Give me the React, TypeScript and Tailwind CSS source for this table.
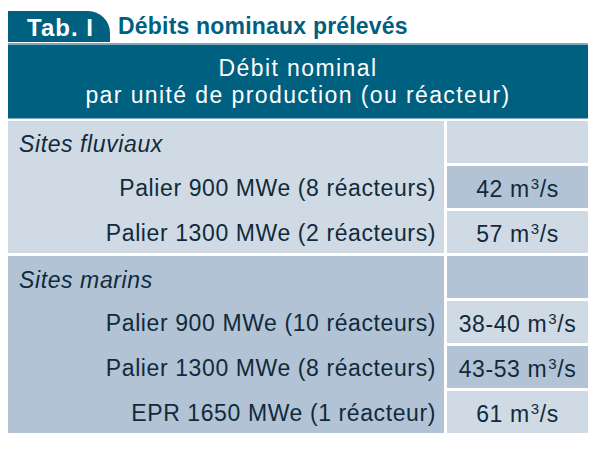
import React from "react";

const font = { fontFamily: '"Liberation Sans", Arial, sans-serif' };

function Val({ v }: { v: string }) {
  return (
    <span>
      {v} m<sup className="text-[15px] relative -top-[8px] ml-[1px]">3</sup>/s
    </span>
  );
}

export default function App() {
  const light = "bg-[#d0dae4]";
  const dark = "bg-[#b1c3d5]";
  return (
    <div className="w-[601px] h-[450px] bg-white pt-[11px] pl-[8px] text-[#112a3b]" style={font}>
      <div className="flex items-stretch h-[31px]">
        <div className="w-[102px] bg-[#00607f] rounded-tr-[22px] pl-[19px] text-white font-bold text-[24px] tracking-[1px] leading-[33px]">
          Tab. I
        </div>
        <div className="ml-[8px] text-[#00607f] font-bold text-[23px] tracking-[0.2px] leading-[31px]">
          Débits nominaux prélevés
        </div>
      </div>
      <div className="mt-[1px] w-[580px] border-t-[2px] border-[#7fa9bf] bg-[#00607f] h-[76px] border-b border-b-[#7fa9bf] flex flex-col items-center justify-center text-white text-[23px] tracking-[1.4px] leading-[27px]">
        <div>Débit nominal</div>
        <div>par unité de production (ou réacteur)</div>
      </div>
      <div className="mt-[2px] flex flex-col gap-[3px] w-[580px] text-[23px] tracking-[0.6px]">
        <div className="flex gap-[3px]">
          <div className={`w-[436px] ${light} flex flex-col`}>
            <div className="h-[42px] flex items-center pt-[5px] pl-[11px] italic">Sites fluviaux</div>
            <div className="h-[45px] flex items-center pt-[5px] justify-end pr-[8px]">Palier 900 MWe (8 réacteurs)</div>
            <div className="h-[45px] flex items-center pt-[5px] justify-end pr-[8px]">Palier 1300 MWe (2 réacteurs)</div>
          </div>
          <div className="flex-1 flex flex-col gap-[3px]">
            <div className={`h-[42px] ${light}`}></div>
            <div className={`h-[42px] ${dark} flex items-center pt-[5px] justify-center`}><Val v="42" /></div>
            <div className={`h-[42px] ${light} flex items-center pt-[5px] justify-center`}><Val v="57" /></div>
          </div>
        </div>
        <div className="flex gap-[3px]">
          <div className={`w-[436px] ${dark} flex flex-col`}>
            <div className="h-[42px] flex items-center pt-[7px] pl-[11px] italic">Sites marins</div>
            <div className="h-[45px] flex items-center pt-[5px] justify-end pr-[8px]">Palier 900 MWe (10 réacteurs)</div>
            <div className="h-[45px] flex items-center pt-[5px] justify-end pr-[8px]">Palier 1300 MWe (8 réacteurs)</div>
            <div className="h-[45px] flex items-center pt-[5px] justify-end pr-[8px]">EPR 1650 MWe (1 réacteur)</div>
          </div>
          <div className="flex-1 flex flex-col gap-[3px]">
            <div className={`h-[42px] ${dark}`}></div>
            <div className={`h-[42px] ${light} flex items-center pt-[5px] justify-center`}><Val v="38-40" /></div>
            <div className={`h-[42px] ${dark} flex items-center pt-[5px] justify-center`}><Val v="43-53" /></div>
            <div className={`h-[42px] ${light} flex items-center pt-[5px] justify-center`}><Val v="61" /></div>
          </div>
        </div>
      </div>
    </div>
  );
}
